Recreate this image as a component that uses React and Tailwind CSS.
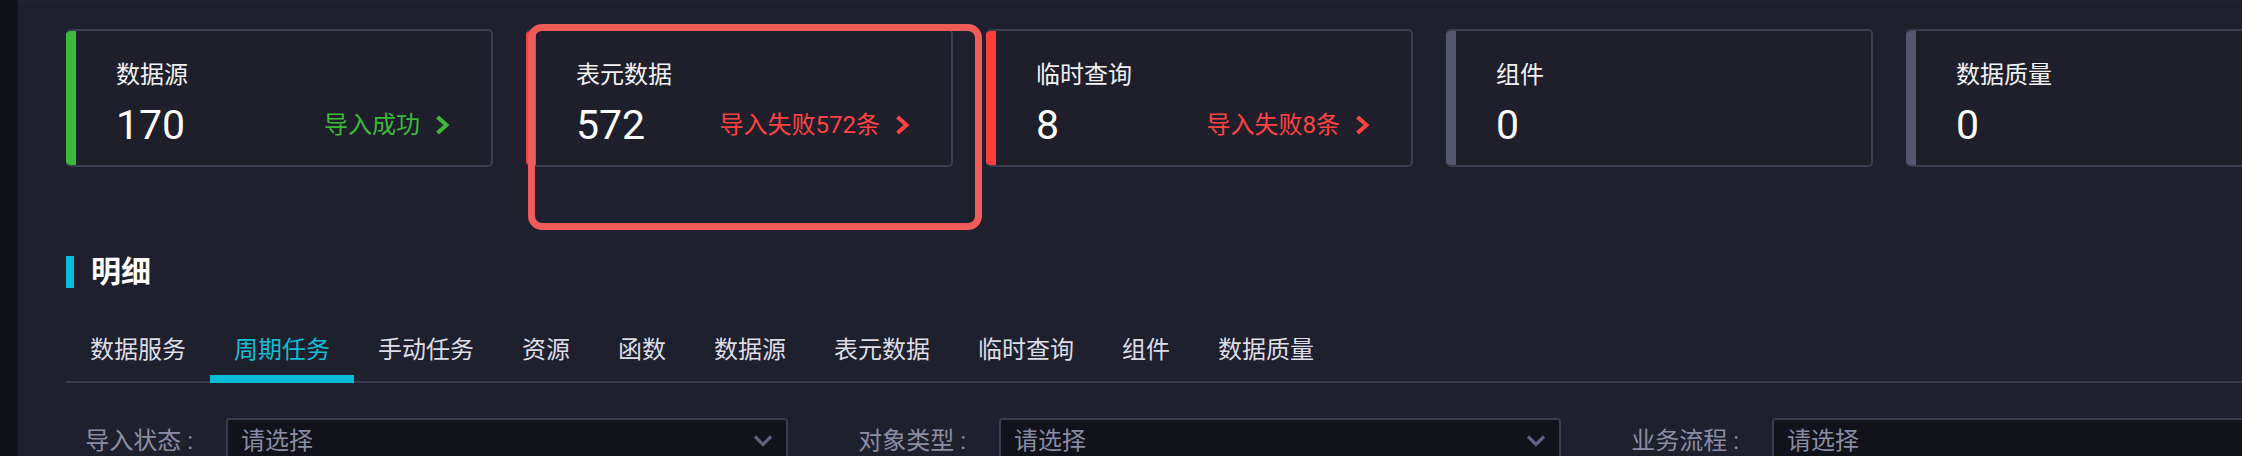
import React from 'react';

const cards = [
  { title: '数据源', value: '170', stripe: 'bg-[#3cb93a]', status: '导入成功', statusColor: 'text-[#3cb93a]' },
  { title: '表元数据', value: '572', stripe: 'bg-[#ff3d3d]', status: '导入失败572条', statusColor: 'text-[#ff4242]' },
  { title: '临时查询', value: '8', stripe: 'bg-[#ff3d3d]', status: '导入失败8条', statusColor: 'text-[#ff4242]' },
  { title: '组件', value: '0', stripe: 'bg-[#555770]' },
  { title: '数据质量', value: '0', stripe: 'bg-[#555770]' },
];

const tabs = ['数据服务', '周期任务', '手动任务', '资源', '函数', '数据源', '表元数据', '临时查询', '组件', '数据质量'];

const filters = ['导入状态', '对象类型', '业务流程'];

function Chevron() {
  return (
    <svg width="15" height="20" viewBox="0 0 15 20">
      <path d="M2.5 2 L11.5 10 L2.5 18" fill="none" stroke="currentColor" strokeWidth="4" />
    </svg>
  );
}

function StatCard({ card }) {
  return (
    <div className="w-[427px] h-[138px] shrink-0 flex rounded-[5px] overflow-hidden border-y-2 border-r-2 border-[#3b3c50] bg-[#1e1f2b]">
      <div className={`w-[10px] shrink-0 ${card.stripe}`} />
      <div className="flex-1 pl-[40px] pr-[41px] pt-[28px]">
        <div className="text-[24px] leading-[32px] text-[#f2f2f5]">{card.title}</div>
        <div className="mt-[10px] flex items-center justify-between">
          <span className="text-[41px] leading-[48px] text-white">{card.value}</span>
          {card.status && (
            <span className={`flex items-center gap-[15px] text-[24px] leading-[32px] ${card.statusColor}`}>
              {card.status}
              <Chevron />
            </span>
          )}
        </div>
      </div>
    </div>
  );
}

export default function App() {
  return (
    <div
      className="relative w-[2242px] h-[456px] flex overflow-hidden bg-[#1f202d]"
      style={{ fontFamily: 'Roboto, "Noto Sans CJK SC", "Noto Sans", sans-serif' }}
    >
      {/* left rail */}
      <div className="w-[18px] shrink-0 bg-[#111218]" />

      <div className="flex-1 min-w-0 border-t-[3px] border-[#23242f] pl-[48px] pt-[26px]">
        {/* stat cards */}
        <div className="flex gap-[33px]">
          {cards.map((c) => (
            <StatCard key={c.title} card={c} />
          ))}
        </div>

        {/* section title */}
        <div className="mt-[89px] flex items-center h-[32px]">
          <div className="w-[8px] h-[32px] bg-[#0bbcd8]" />
          <h2 className="ml-[17px] text-[30px] leading-[32px] font-bold text-white">明细</h2>
        </div>

        {/* tabs */}
        <div className="mt-[46px] flex border-b-2 border-[#3a3b4e]">
          {tabs.map((t, i) => (
            <div key={t} className="relative px-[24px] pb-[15px]">
              <span className={`block text-[24px] leading-[32px] ${i === 1 ? 'text-[#14bdd8]' : 'text-[#dcdde6]'}`}>
                {t}
              </span>
              {i === 1 && <div className="absolute left-0 right-0 bottom-[-2px] h-[8px] bg-[#0bbcd8]" />}
            </div>
          ))}
        </div>

        {/* filters */}
        <div className="mt-[35px] flex gap-[51px]">
          {filters.map((f) => (
            <div key={f} className="flex shrink-0 items-center">
              <label className="w-[160px] pr-[33px] text-right text-[24px] leading-[32px] text-[#8b8da4]">
                {f} :
              </label>
              <div className="w-[562px] h-[46px] flex items-center justify-between rounded-[4px] border-2 border-[#3a3b4e] bg-[#11121a] pl-[13px] pr-[13px]">
                <span className="text-[24px] leading-[32px] text-[#8a8ca3]">请选择</span>
                <svg width="20" height="14" viewBox="0 0 20 14" className="text-[#5f6180]">
                  <path d="M2 2.5 L10 10.5 L18 2.5" fill="none" stroke="currentColor" strokeWidth="3.2" />
                </svg>
              </div>
            </div>
          ))}
        </div>
      </div>

      {/* highlight annotation */}
      <div className="absolute left-[528px] top-[24px] w-[454px] h-[206px] rounded-[14px] border-[7px] border-[#ef5b58] pointer-events-none" />
    </div>
  );
}
